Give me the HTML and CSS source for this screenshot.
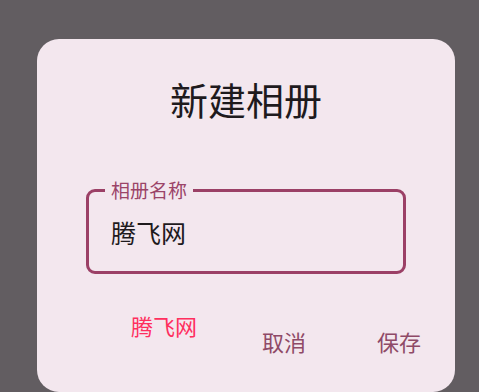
FILE: index.html
```html
<!DOCTYPE html>
<html lang="zh-CN">
<head>
<meta charset="utf-8">
<title>新建相册</title>
<link rel="stylesheet" href="styles.css">
</head>
<body>
<div class="dialog">
  <div class="title">新建相册</div>
  <div class="field">
    <span class="field-label">相册名称</span>
    <div class="field-value">腾飞网</div>
  </div>
  <div class="actions">
    <span class="brand">腾飞网</span>
    <span class="spacer"></span>
    <span class="btn">取消</span>
    <span class="btn">保存</span>
  </div>
</div>
</body>
</html>
```
FILE: styles.css
```css
html, body {
  margin: 0;
  padding: 0;
}
body {
  width: 479px;
  height: 392px;
  overflow: hidden;
  background: #625d61;
  font-family: "Noto Sans CJK SC", "Noto Sans", sans-serif;
}
.dialog {
  margin: 39px 0 0 37px;
  width: 418px;
  height: 353px;
  box-sizing: border-box;
  background: #f3e7ee;
  border-radius: 22px;
  padding-top: 37px;
  display: flex;
  flex-direction: column;
}
.title {
  font-size: 38px;
  line-height: 46px;
  color: #1e1a1d;
  text-align: center;
}
.field {
  position: relative;
  margin: 67px 49px 0 49px;
  height: 85px;
  box-sizing: border-box;
  border: 3px solid #9b4066;
  border-radius: 9px;
  display: flex;
  align-items: center;
  padding-left: 22px;
}
.field-label {
  position: absolute;
  left: 16px;
  top: -15px;
  padding: 0 6px;
  background: #f3e7ee;
  font-size: 19px;
  line-height: 26px;
  color: #9b4468;
}
.field-value {
  font-size: 25px;
  line-height: 32px;
  color: #1e1a1d;
  margin-top: 1px;
}
.actions {
  display: flex;
  align-items: flex-start;
  margin-top: 36px;
  padding: 0 34px 0 94px;
}
.brand {
  font-size: 22px;
  line-height: 30px;
  color: #ff2f5e;
}
.spacer {
  flex: 1;
}
.btn {
  font-size: 22px;
  line-height: 30px;
  color: #8f4a67;
  margin-top: 16px;
}
.btn + .btn {
  margin-left: 71px;
}
```
